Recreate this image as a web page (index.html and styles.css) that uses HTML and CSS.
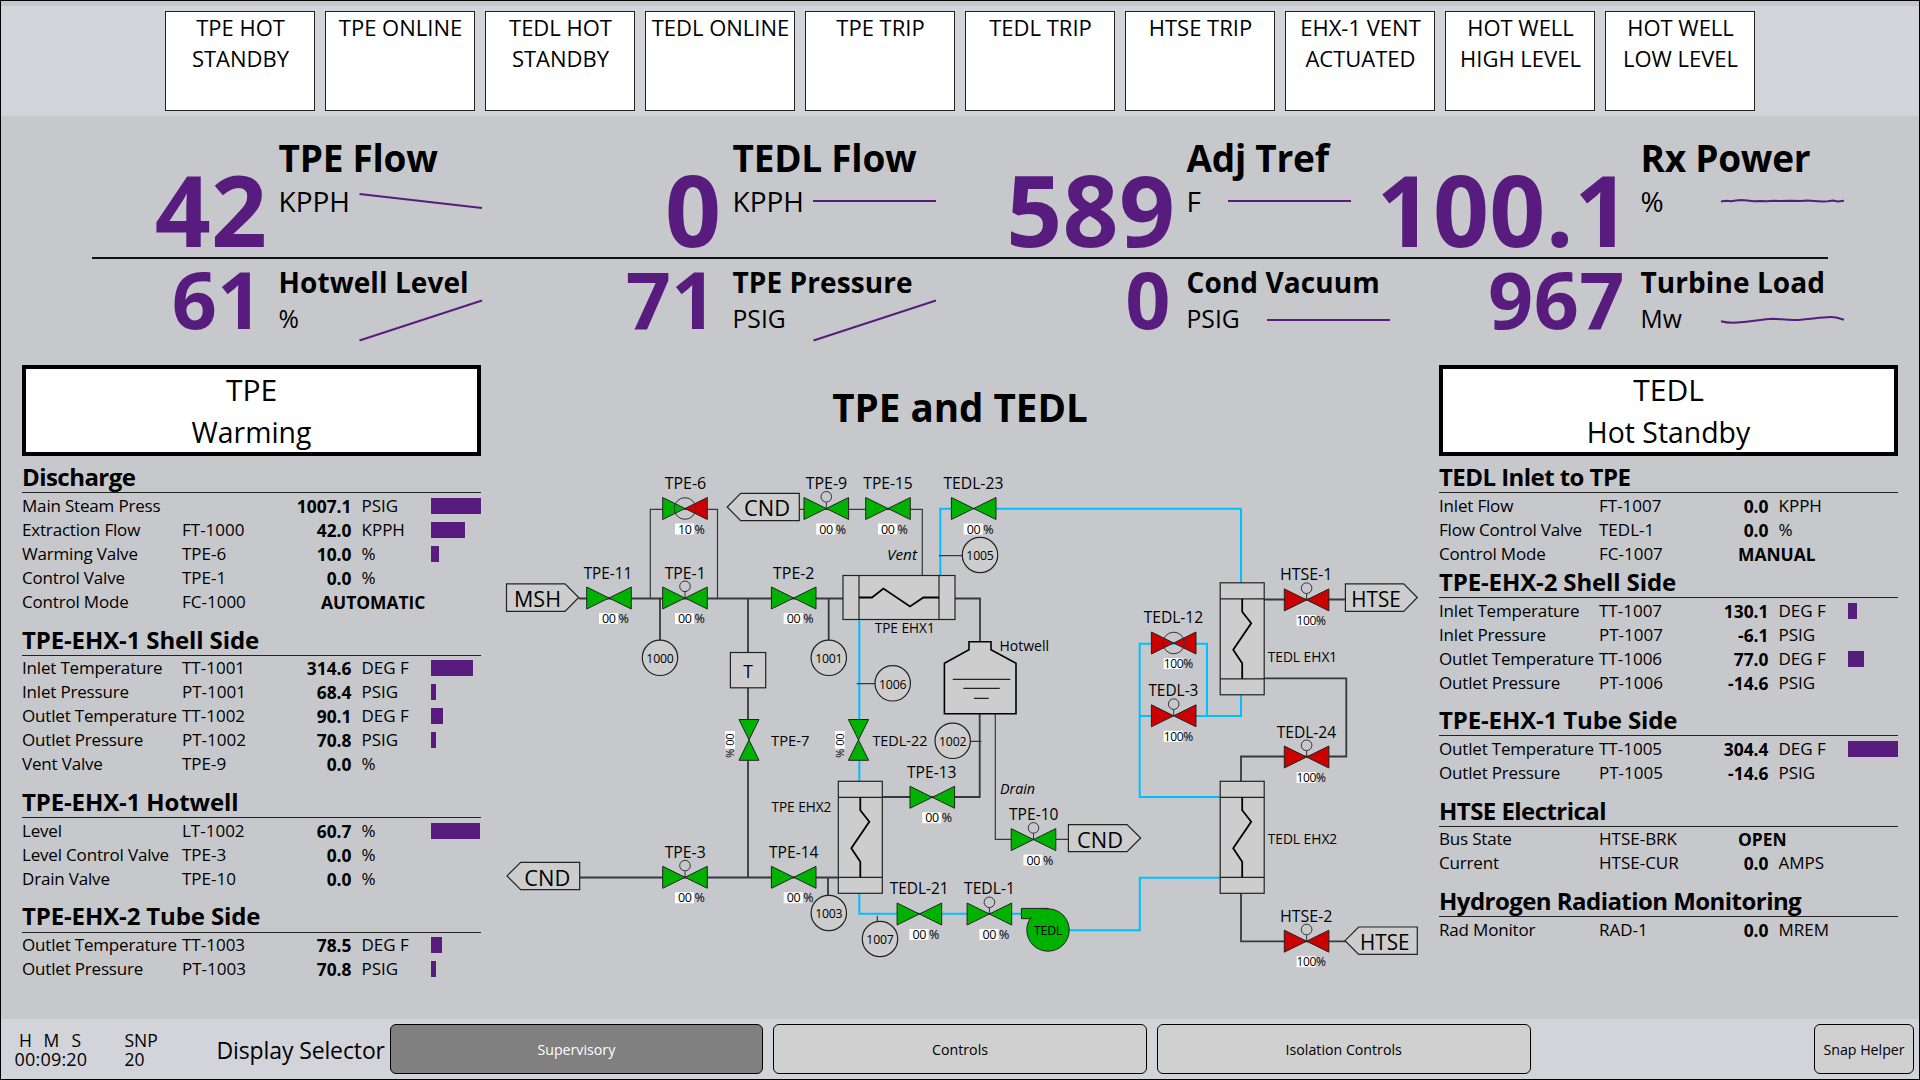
FILE: index.html
```html
<!DOCTYPE html>
<html lang="en">
<head>
<meta charset="utf-8">
<title>TPE and TEDL Supervisory</title>
<link rel="stylesheet" href="styles.css">
</head>
<body>
<div class="screen">
  <header class="alarms">
    <div class="alarm">TPE HOT STANDBY</div>
    <div class="alarm">TPE ONLINE</div>
    <div class="alarm">TEDL HOT STANDBY</div>
    <div class="alarm">TEDL ONLINE</div>
    <div class="alarm">TPE TRIP</div>
    <div class="alarm">TEDL TRIP</div>
    <div class="alarm">HTSE TRIP</div>
    <div class="alarm">EHX-1 VENT ACTUATED</div>
    <div class="alarm">HOT WELL HIGH LEVEL</div>
    <div class="alarm">HOT WELL LOW LEVEL</div>
  </header>

  <section class="kpis kpis-major">
    <div class="kpi"><div class="kpi-value">42</div><div class="kpi-info"><div class="kpi-name">TPE Flow</div><div class="kpi-sub"><span class="kpi-unit">KPPH</span><svg class="trend" viewBox="0 0 124 36"><path d="M0.5 10L123 24"/></svg></div></div></div>
    <div class="kpi"><div class="kpi-value">0</div><div class="kpi-info"><div class="kpi-name">TEDL Flow</div><div class="kpi-sub"><span class="kpi-unit">KPPH</span><svg class="trend" viewBox="0 0 124 36"><path d="M0 17H123"/></svg></div></div></div>
    <div class="kpi"><div class="kpi-value">589</div><div class="kpi-info"><div class="kpi-name">Adj Tref</div><div class="kpi-sub"><span class="kpi-unit kpi-unit-short">F</span><svg class="trend" viewBox="0 0 124 36"><path d="M0 17H123"/></svg></div></div></div>
    <div class="kpi"><div class="kpi-value">100.1</div><div class="kpi-info"><div class="kpi-name">Rx Power</div><div class="kpi-sub"><span class="kpi-unit">%</span><svg class="trend" viewBox="0 0 124 36"><path d="M0 17.4L5 16.8L10 17.3L15 16.4L20 16L26 16.6L33 17.3L40 16.9L46 17.2L52 16.7L60 17L70 16.7L80 17L86 16.5L93 17L101 17.6L107 17.3L112 16.6L117 17.5L123 16.8"/></svg></div></div></div>
  </section>
  <hr class="divider">
  <section class="kpis kpis-minor">
    <div class="kpi"><div class="kpi-value">61</div><div class="kpi-info"><div class="kpi-name">Hotwell Level</div><div class="kpi-sub"><span class="kpi-unit">%</span><svg class="trend" viewBox="0 0 124 36"><path d="M0.5 37.5L123 -2.5"/></svg></div></div></div>
    <div class="kpi"><div class="kpi-value">71</div><div class="kpi-info"><div class="kpi-name">TPE Pressure</div><div class="kpi-sub"><span class="kpi-unit">PSIG</span><svg class="trend" viewBox="0 0 124 36"><path d="M0.5 37.5L123 -2.5"/></svg></div></div></div>
    <div class="kpi"><div class="kpi-value">0</div><div class="kpi-info"><div class="kpi-name">Cond Vacuum</div><div class="kpi-sub"><span class="kpi-unit">PSIG</span><svg class="trend" viewBox="0 0 124 36"><path d="M0 17H123"/></svg></div></div></div>
    <div class="kpi"><div class="kpi-value">967</div><div class="kpi-info"><div class="kpi-name">Turbine Load</div><div class="kpi-sub"><span class="kpi-unit">Mw</span><svg class="trend" viewBox="0 0 124 36"><path d="M0 18.3C6 20 12 20.2 20 19.3C32 18 44 16 52 15.7C60 16 66 17.2 74 17C88 16.5 98 14.2 110 14C115 14 119 15.5 123 16.7"/></svg></div></div></div>
  </section>

  <main class="main">
    <aside class="panel">
      <div class="status"><div class="status-name">TPE</div><div class="status-mode">Warming</div></div>
      <section class="group">
        <h2>Discharge</h2>
        <div class="row"><span>Main Steam Press</span><span></span><b>1007.1</b><span class="unit">PSIG</span><i class="bar" style="width:50px"></i></div>
        <div class="row"><span>Extraction Flow</span><span class="tag">FT-1000</span><b>42.0</b><span class="unit">KPPH</span><i class="bar" style="width:34px"></i></div>
        <div class="row"><span>Warming Valve</span><span class="tag">TPE-6</span><b>10.0</b><span class="unit">%</span><i class="bar" style="width:8px"></i></div>
        <div class="row"><span>Control Valve</span><span class="tag">TPE-1</span><b>0.0</b><span class="unit">%</span></div>
        <div class="row"><span>Control Mode</span><span class="tag">FC-1000</span><b class="mode">AUTOMATIC</b></div>
      </section>
      <section class="group">
        <h2 class="equipment">TPE-EHX-1 Shell Side</h2>
        <div class="row"><span>Inlet Temperature</span><span class="tag">TT-1001</span><b>314.6</b><span class="unit">DEG F</span><i class="bar" style="width:42px"></i></div>
        <div class="row"><span>Inlet Pressure</span><span class="tag">PT-1001</span><b>68.4</b><span class="unit">PSIG</span><i class="bar" style="width:5px"></i></div>
        <div class="row"><span>Outlet Temperature</span><span class="tag">TT-1002</span><b>90.1</b><span class="unit">DEG F</span><i class="bar" style="width:12px"></i></div>
        <div class="row"><span>Outlet Pressure</span><span class="tag">PT-1002</span><b>70.8</b><span class="unit">PSIG</span><i class="bar" style="width:5px"></i></div>
        <div class="row"><span>Vent Valve</span><span class="tag">TPE-9</span><b>0.0</b><span class="unit">%</span></div>
      </section>
      <section class="group">
        <h2 class="equipment">TPE-EHX-1 Hotwell</h2>
        <div class="row"><span>Level</span><span class="tag">LT-1002</span><b>60.7</b><span class="unit">%</span><i class="bar" style="width:49px"></i></div>
        <div class="row"><span>Level Control Valve</span><span class="tag">TPE-3</span><b>0.0</b><span class="unit">%</span></div>
        <div class="row"><span>Drain Valve</span><span class="tag">TPE-10</span><b>0.0</b><span class="unit">%</span></div>
      </section>
      <section class="group">
        <h2 class="equipment">TPE-EHX-2 Tube Side</h2>
        <div class="row"><span>Outlet Temperature</span><span class="tag">TT-1003</span><b>78.5</b><span class="unit">DEG F</span><i class="bar" style="width:11px"></i></div>
        <div class="row"><span>Outlet Pressure</span><span class="tag">PT-1003</span><b>70.8</b><span class="unit">PSIG</span><i class="bar" style="width:5px"></i></div>
      </section>
    </aside>

    <div class="center">
      <h1>TPE and TEDL</h1>
      <svg class="mimic" viewBox="481 445 958 574" width="958" height="574">
        <defs>
          <path id="bowtie" d="M-22.3-11L0 0L22.3-11V11L0 0L-22.3 11Z"/>
          <g id="actuator"><path d="M0-6V0"/><circle cy="-11.7" r="5.3"/></g>
          <rect id="readout" x="-10" y="15" width="19" height="11"/>
          <g id="exchanger">
            <rect x="-22" y="-56" width="44" height="112"/>
            <path d="M-22-40H22M-22 40H22"/>
            <path class="coil" d="M0-40V-27L9-15.6L-9 11L0 24.4V40"/>
          </g>
          <circle id="sensor" r="17.7"/>
        </defs>

        <g class="pipe">
          <path d="M579 598.5H843M955 598.5H980V642"/>
          <path class="thin" d="M650.3 598.5V509.3H717.5V598.5"/>
          <path d="M660 598.5V640M828.7 598.5V640M748 598.5V652M748 688V719M748 760V877.5"/>
          <path class="thin" d="M799 509.3H922.3V575.5"/>
          <path d="M979.7 714V797H882"/>
          <path class="thin" d="M995.3 714V839.3H1068.5M971 741.3H981.5"/>
          <path d="M580 877.5H838.5M828 877.5V896"/>
          <path d="M1264 599.5H1345.5M1264 678.3H1346.3V756.5H1241V781.5M1241 893V941.3H1345.5"/>
        </g>
        <g class="water">
          <path d="M940.3 575.5V508.7H1241V583"/>
          <path d="M859.3 619.5V719M859.3 760V781.5M859.3 893V913.7H1022M1069 930.3H1139.8V877.7H1220"/>
          <path d="M1241 694.5V716H1139.7M1207 716V643.7H1139.7V797H1220"/>
        </g>
        <path class="pipe thin" d="M939 555.6H962.5M856.7 683.6H875M877.3 915.7V922"/>

        <g class="shape">
          <path d="M506.5 583.8H565L578.7 597.5L565 611.3H506.5Z"/>
          <path d="M799.3 493.3H740.7L727.2 507L740.7 520.7H799.3Z"/>
          <path d="M579.7 862.3H520.7L507 875.9L520.7 889.6H579.7Z"/>
          <path d="M1068.4 824.6H1127L1140.7 838L1127 851.6H1068.4Z"/>
          <path d="M1345.4 583.8H1403.7L1417.3 597.5L1403.7 611.3H1345.4Z"/>
          <path d="M1417.3 927H1358.7L1345 940.7L1358.7 954.4H1417.3Z"/>
          <rect x="730.4" y="652.5" width="35.3" height="35.3"/>
          <use href="#sensor" x="660" y="657.8"/><use href="#sensor" x="828.8" y="657.8"/>
          <use href="#sensor" x="980" y="555"/><use href="#sensor" x="892.7" y="683.3"/>
          <use href="#sensor" x="952.7" y="740.8"/><use href="#sensor" x="828.8" y="913"/>
          <use href="#sensor" x="880" y="939"/>
          <use href="#exchanger" transform="translate(899 597.5) rotate(-90)"/>
          <use href="#exchanger" x="860.3" y="837.3"/>
          <use href="#exchanger" x="1242.2" y="638.8"/>
          <use href="#exchanger" x="1242.2" y="837.3"/>
          <path class="tank" d="M969 641.8H991V649.7L1016 663.3V713.7H944.4V663.3L969 649.7Z"/>
          <path d="M952.7 679.4H1010.3M963.3 688.4H999.7M974 698.4H988.7"/>
        </g>

        <g class="valve open">
          <use href="#bowtie" x="609" y="598"/><use href="#bowtie" x="685" y="598"/><use href="#bowtie" x="793.7" y="598"/>
          <use href="#bowtie" x="826.3" y="508.5"/><use href="#bowtie" x="888" y="508.5"/><use href="#bowtie" x="973.7" y="508.5"/>
          <use href="#bowtie" x="932.3" y="797.3"/><use href="#bowtie" x="1033.5" y="839.6"/>
          <use href="#bowtie" x="685" y="877.3"/><use href="#bowtie" x="793.7" y="877.3"/>
          <use href="#bowtie" x="919.4" y="914"/><use href="#bowtie" x="989.4" y="914"/>
          <path d="M739 719.5H759L739 760.3H759Z"/><path d="M848.4 719.5H868.6L848.4 760.3H868.6Z"/>
          <path d="M662.7 497.5L685 508.5L662.7 519.5Z"/>
          <path d="M1021.4 908.4H1048V918.7H1021.4Z"/><circle cx="1048" cy="930" r="21.2"/>
          <path class="joint" d="M1030 909.2H1046V917.8H1032Z"/>
        </g>
        <g class="valve shut">
          <path d="M707.3 497.5L685 508.5L707.3 519.5Z"/>
          <use href="#bowtie" x="1306.6" y="599.9"/><use href="#bowtie" x="1173.7" y="643"/><use href="#bowtie" x="1173.7" y="715.8"/>
          <use href="#bowtie" x="1306.6" y="757"/><use href="#bowtie" x="1306.6" y="941.2"/>
        </g>
        <g class="outline">
          <circle cx="685" cy="508.5" r="10.8"/><circle cx="1173.7" cy="643" r="10.8"/>
          <use href="#actuator" x="685" y="598"/><use href="#actuator" x="826.3" y="508.5"/><use href="#actuator" x="1033.5" y="839.6"/>
          <use href="#actuator" x="685" y="877.3"/><use href="#actuator" x="989.4" y="914"/>
          <use href="#actuator" x="1306.6" y="599.9"/><use href="#actuator" x="1173.7" y="715.8"/><use href="#actuator" x="1306.6" y="757"/><use href="#actuator" x="1306.6" y="941.2"/>
        </g>
        <g class="readouts">
          <use href="#readout" x="609" y="598"/><use href="#readout" x="685" y="598"/><use href="#readout" x="793.7" y="598"/>
          <use href="#readout" x="685" y="508.5"/><use href="#readout" x="826.3" y="508.5"/><use href="#readout" x="888" y="508.5"/><use href="#readout" x="973.7" y="508.5"/>
          <use href="#readout" x="932.3" y="797.3"/><use href="#readout" x="1033.5" y="839.6"/>
          <use href="#readout" x="685" y="877.3"/><use href="#readout" x="793.7" y="877.3"/><use href="#readout" x="919.4" y="914"/><use href="#readout" x="989.4" y="914"/>
          <use href="#readout" x="1306.6" y="599.9"/><use href="#readout" x="1173.7" y="643"/><use href="#readout" x="1173.7" y="715.8"/><use href="#readout" x="1306.6" y="757"/><use href="#readout" x="1306.6" y="941.2"/>
          <rect x="725.3" y="731" width="9.7" height="17.7"/><rect x="835" y="731" width="9.7" height="17.7"/>
        </g>

        <g class="percent">
          <text x="602" y="623">00</text><text x="618.5" y="623">%</text>
          <text x="678" y="623">00</text><text x="694.5" y="623">%</text>
          <text x="786.7" y="623">00</text><text x="803.2" y="623">%</text>
          <text x="678" y="533.5">10</text><text x="694.5" y="533.5">%</text>
          <text x="819.3" y="533.5">00</text><text x="835.8" y="533.5">%</text>
          <text x="881" y="533.5">00</text><text x="897.5" y="533.5">%</text>
          <text x="966.7" y="533.5">00</text><text x="983.2" y="533.5">%</text>
          <text x="925.3" y="822.3">00</text><text x="941.8" y="822.3">%</text>
          <text x="1026.5" y="864.6">00</text><text x="1043" y="864.6">%</text>
          <text x="678" y="902.3">00</text><text x="694.5" y="902.3">%</text>
          <text x="786.7" y="902.3">00</text><text x="803.2" y="902.3">%</text>
          <text x="912.4" y="939">00</text><text x="928.9" y="939">%</text>
          <text x="982.4" y="939">00</text><text x="998.9" y="939">%</text>
          <text x="1296.6" y="625" textLength="29" lengthAdjust="spacingAndGlyphs">100%</text>
          <text x="1163.7" y="668" textLength="29" lengthAdjust="spacingAndGlyphs">100%</text>
          <text x="1163.7" y="740.8" textLength="29" lengthAdjust="spacingAndGlyphs">100%</text>
          <text x="1296.6" y="782" textLength="29" lengthAdjust="spacingAndGlyphs">100%</text>
          <text x="1296.6" y="966.2" textLength="29" lengthAdjust="spacingAndGlyphs">100%</text>
          <g class="upright"><text transform="translate(726.3 733.5) rotate(90)">00</text><text transform="translate(726.3 748.8) rotate(90)">%</text>
          <text transform="translate(836 733.5) rotate(90)">00</text><text transform="translate(836 748.8) rotate(90)">%</text></g>
        </g>

        <g class="label">
          <text x="583.7" y="578.5" textLength="48.5" lengthAdjust="spacingAndGlyphs">TPE-11</text>
          <text x="664.7" y="578.5" textLength="41" lengthAdjust="spacingAndGlyphs">TPE-1</text>
          <text x="773" y="578.5" textLength="41.5" lengthAdjust="spacingAndGlyphs">TPE-2</text>
          <text x="664.7" y="488.7" textLength="41.5" lengthAdjust="spacingAndGlyphs">TPE-6</text>
          <text x="805.7" y="488.7" textLength="41.5" lengthAdjust="spacingAndGlyphs">TPE-9</text>
          <text x="863.3" y="488.7" textLength="49.5" lengthAdjust="spacingAndGlyphs">TPE-15</text>
          <text x="943.4" y="488.7" textLength="60" lengthAdjust="spacingAndGlyphs">TEDL-23</text>
          <text x="907" y="777.7" textLength="49.5" lengthAdjust="spacingAndGlyphs">TPE-13</text>
          <text x="1009" y="820" textLength="49.5" lengthAdjust="spacingAndGlyphs">TPE-10</text>
          <text x="664.7" y="857.5" textLength="41" lengthAdjust="spacingAndGlyphs">TPE-3</text>
          <text x="769" y="857.5" textLength="49.5" lengthAdjust="spacingAndGlyphs">TPE-14</text>
          <text x="889.7" y="894.3" textLength="59" lengthAdjust="spacingAndGlyphs">TEDL-21</text>
          <text x="964" y="894.3" textLength="51" lengthAdjust="spacingAndGlyphs">TEDL-1</text>
          <text x="1143.7" y="622.9" textLength="59.5" lengthAdjust="spacingAndGlyphs">TEDL-12</text>
          <text x="1148.4" y="695.9" textLength="50" lengthAdjust="spacingAndGlyphs">TEDL-3</text>
          <text x="1276.7" y="737.5" textLength="59.5" lengthAdjust="spacingAndGlyphs">TEDL-24</text>
          <text x="1280" y="580.2" textLength="52.5" lengthAdjust="spacingAndGlyphs">HTSE-1</text>
          <text x="1280" y="921.5" textLength="52.5" lengthAdjust="spacingAndGlyphs">HTSE-2</text>
          <g class="side">
            <text x="771" y="745.7" textLength="38.5" lengthAdjust="spacingAndGlyphs">TPE-7</text>
            <text x="872.4" y="745.7" textLength="55" lengthAdjust="spacingAndGlyphs">TEDL-22</text>
          </g>
        </g>
        <g class="note">
          <text x="874.7" y="632.8" textLength="60" lengthAdjust="spacingAndGlyphs">TPE EHX1</text>
          <text x="771.4" y="812" textLength="60" lengthAdjust="spacingAndGlyphs">TPE EHX2</text>
          <text x="1267.7" y="662" textLength="69.5" lengthAdjust="spacingAndGlyphs">TEDL EHX1</text>
          <text x="1267.7" y="844.3" textLength="69.5" lengthAdjust="spacingAndGlyphs">TEDL EHX2</text>
          <text x="999.5" y="651" textLength="49.5" lengthAdjust="spacingAndGlyphs">Hotwell</text>
          <text class="slanted" x="887" y="560" textLength="30" lengthAdjust="spacingAndGlyphs">Vent</text>
          <text class="slanted" x="1000" y="793.5" textLength="35" lengthAdjust="spacingAndGlyphs">Drain</text>
        </g>
        <g class="sensor-id">
          <text x="660" y="662.7">1000</text><text x="828.8" y="662.7">1001</text>
          <text x="980" y="559.9">1005</text><text x="892.7" y="688.7">1006</text>
          <text x="952.7" y="745.9">1002</text><text x="828.8" y="918.2">1003</text>
          <text x="880" y="943.9">1007</text><text x="1048" y="934.9">TEDL</text>
          <text class="trap" x="748" y="677.8">T</text>
        </g>
        <g class="port">
          <text x="514" y="607.2" textLength="47" lengthAdjust="spacingAndGlyphs">MSH</text>
          <text x="744" y="516.2" textLength="46" lengthAdjust="spacingAndGlyphs">CND</text>
          <text x="524.3" y="885.8" textLength="46" lengthAdjust="spacingAndGlyphs">CND</text>
          <text x="1077" y="847.8" textLength="46" lengthAdjust="spacingAndGlyphs">CND</text>
          <text x="1351.3" y="607.2" textLength="49.5" lengthAdjust="spacingAndGlyphs">HTSE</text>
          <text x="1360" y="950.4" textLength="49.5" lengthAdjust="spacingAndGlyphs">HTSE</text>
        </g>
      </svg>
    </div>

    <aside class="panel">
      <div class="status"><div class="status-name">TEDL</div><div class="status-mode">Hot Standby</div></div>
      <section class="group group-tight">
        <h2>TEDL Inlet to TPE</h2>
        <div class="row"><span>Inlet Flow</span><span class="tag">FT-1007</span><b>0.0</b><span class="unit">KPPH</span></div>
        <div class="row"><span>Flow Control Valve</span><span class="tag">TEDL-1</span><b>0.0</b><span class="unit">%</span></div>
        <div class="row"><span>Control Mode</span><span class="tag">FC-1007</span><b class="mode">MANUAL</b></div>
      </section>
      <section class="group">
        <h2 class="equipment">TPE-EHX-2 Shell Side</h2>
        <div class="row"><span>Inlet Temperature</span><span class="tag">TT-1007</span><b>130.1</b><span class="unit">DEG F</span><i class="bar" style="width:9px"></i></div>
        <div class="row"><span>Inlet Pressure</span><span class="tag">PT-1007</span><b>-6.1</b><span class="unit">PSIG</span></div>
        <div class="row"><span>Outlet Temperature</span><span class="tag">TT-1006</span><b>77.0</b><span class="unit">DEG F</span><i class="bar" style="width:15.5px"></i></div>
        <div class="row"><span>Outlet Pressure</span><span class="tag">PT-1006</span><b>-14.6</b><span class="unit">PSIG</span></div>
      </section>
      <section class="group">
        <h2 class="equipment">TPE-EHX-1 Tube Side</h2>
        <div class="row"><span>Outlet Temperature</span><span class="tag">TT-1005</span><b>304.4</b><span class="unit">DEG F</span><i class="bar" style="width:50px"></i></div>
        <div class="row"><span>Outlet Pressure</span><span class="tag">PT-1005</span><b>-14.6</b><span class="unit">PSIG</span></div>
      </section>
      <section class="group">
        <h2>HTSE Electrical</h2>
        <div class="row"><span>Bus State</span><span class="tag">HTSE-BRK</span><b class="mode">OPEN</b></div>
        <div class="row"><span>Current</span><span class="tag">HTSE-CUR</span><b>0.0</b><span class="unit">AMPS</span></div>
      </section>
      <section class="group">
        <h2>Hydrogen Radiation Monitoring</h2>
        <div class="row"><span>Rad Monitor</span><span class="tag">RAD-1</span><b>0.0</b><span class="unit">MREM</span></div>
      </section>
    </aside>
  </main>

  <footer class="footer">
    <div class="clock"><div class="clock-head"><span>H</span><span>M</span><span>S</span></div><div class="clock-time">00:09:20</div></div>
    <div class="snap"><div>SNP</div><div>20</div></div>
    <div class="selector-label">Display Selector</div>
    <nav class="selector">
      <button class="btn btn-active">Supervisory</button>
      <button class="btn">Controls</button>
      <button class="btn">Isolation Controls</button>
    </nav>
    <button class="btn btn-helper">Snap Helper</button>
  </footer>
</div>
</body>
</html>
```
FILE: styles.css
```css
* { box-sizing: border-box; }

body {
  margin: 0;
  font-family: "Open Sans", "Noto Sans", sans-serif;
  color: #000;
}

.screen {
  width: 1920px;
  height: 1080px;
  border: 1px solid #000;
  background: #c7c8cc;
  display: flex;
  flex-direction: column;
  overflow: hidden;
}

/* Alarm strip */
.alarms {
  height: 115px;
  flex: none;
  display: flex;
  justify-content: center;
  gap: 10px;
  padding-top: 4px;
  border-top: 5px solid #c7c6cd;
  background: #d3d4d9;
}
.alarm {
  width: 150px;
  height: 100px;
  margin-top: 1px;
  padding-left: 1px;
  border: 1px solid #222;
  background: #fff;
  text-align: center;
  font-size: 22px;
  line-height: 31px;
}

/* Key values */
.kpis {
  flex: none;
  display: grid;
  grid-template-columns: repeat(4, 454px);
  padding-left: 13.5px;
}
.kpis-major { height: 141px; }
.kpis-minor { height: 106px; }
.kpi {
  display: grid;
  grid-template-columns: 253px 190px;
  column-gap: 11px;
}
.kpi-value {
  color: #581b7e;
  font-weight: 700;
  text-align: right;
  white-space: nowrap;
}
.kpi-name { font-weight: 700; white-space: nowrap; }
.kpi-sub { display: flex; height: 36px; }
.kpi-unit { width: 80.3px; flex: none; }
.kpi-unit-short { width: 41.8px; }
.trend {
  width: 124px;
  height: 36px;
  flex: none;
  overflow: visible;
  fill: none;
  stroke: #581b7e;
  stroke-width: 2;
}
.kpis-major .kpi-value { padding-top: 43px; font-size: 98px; line-height: 100px; letter-spacing: 0.4px; }
.kpis-major .kpi-info { padding-top: 16px; }
.kpis-major .kpi-name { font-size: 37px; line-height: 51px; margin-bottom: 1px; letter-spacing: -0.25px; }
.kpis-major .kpi-unit { font-size: 28px; line-height: 35px; }
.kpis-minor .kpi-value { font-size: 79px; line-height: 80px; padding-right: 4.5px; letter-spacing: 0.5px; }
.kpis-minor .kpi-info { padding-top: 5px; }
.kpis-minor .kpi-name { font-size: 28px; line-height: 36px; margin-bottom: 3px; letter-spacing: 0.08px; }
.kpis-minor .kpi-unit { font-size: 24.7px; line-height: 32px; }

.divider {
  width: 1736px;
  height: 2px;
  flex: none;
  margin: 0 0 0 91px;
  border: 0;
  background: #111;
}

/* Panels and mimic */
.main {
  flex: 1;
  display: grid;
  grid-template-columns: 459px 958px 459px;
  padding-left: 21px;
}
.status {
  height: 90.5px;
  margin-bottom: 5.7px;
  border: 4px solid #000;
  background: #fff;
  text-align: center;
}
.status-name { font-size: 30px; line-height: 42px; }
.status-mode { font-size: 28.4px; line-height: 42px; }
.group { margin-bottom: 10.1px; }
.group-tight { margin-bottom: 0.3px; }
.group h2 {
  height: 32.3px;
  margin: 0;
  border-bottom: 1px solid #222;
  font-size: 24px;
  line-height: 31.5px;
  font-weight: 700;
  letter-spacing: -0.55px;
}
.group .equipment { letter-spacing: -0.13px; }
.row {
  display: grid;
  grid-template-columns: 160px 79px 90.5px 68.5px 50px;
  align-items: center;
  height: 24px;
  padding-top: 0.6px;
  font-size: 17px;
  line-height: 24px;
  letter-spacing: -0.18px;
  white-space: nowrap;
}
.row b { font-size: 17.4px; letter-spacing: 0; text-align: right; }
.row .mode { grid-column: 3 / span 2; padding-left: 60px; text-align: left; }
.row .tag { letter-spacing: 0; }
.row .unit { padding-left: 10px; letter-spacing: 0; }
.bar { justify-self: start; margin-left: 11px; height: 16px; background: #581b7e; }

.center h1 {
  height: 80px;
  margin: 0;
  padding-top: 16px;
  font-size: 38.6px;
  line-height: 53px;
  text-align: center;
}
.mimic { display: block; stroke-linejoin: miter; }
.mimic text { stroke: none; fill: #000; }
.pipe { fill: none; stroke: #383838; stroke-width: 1.8; }
.pipe .thin, .pipe.thin { stroke-width: 1.2; }
.water { fill: none; stroke: #00bfff; stroke-width: 2; }
.shape { fill: #cdcdcd; stroke: #222; stroke-width: 1.2; }
.coil { fill: none; stroke: #000; stroke-width: 1.8; }
.tank { stroke: #000; stroke-width: 1.6; }
.valve { stroke: #222; stroke-width: 1; }
.open { fill: #00b200; }
.shut { fill: #cc0000; }
.joint { stroke: none; }
.outline { fill: none; stroke: #333; stroke-width: 1; }
.readouts { fill: #fff; stroke: none; }
.percent { font-size: 12.5px; letter-spacing: -0.4px; }
.upright { font-size: 11px; letter-spacing: -0.3px; }
.label { font-size: 15.8px; }
.side { font-size: 15px; }
.note { font-size: 14px; }
.slanted { font-style: italic; }
.sensor-id { font-size: 12.3px; letter-spacing: -0.2px; text-anchor: middle; }
.trap { font-size: 17.5px; }
.port { font-size: 21.5px; }

/* Footer */
.footer {
  height: 60px;
  flex: none;
  display: flex;
  padding: 5px 5px 5px 13.5px;
  background: #d3d4d9;
}
.clock { width: 110px; padding-top: 7px; font-size: 18px; line-height: 19px; }
.clock-head { display: grid; grid-template-columns: 24.5px 28px 20px; padding-left: 4.5px; font-size: 17.5px; }
.clock-time { letter-spacing: 0.2px; }
.snap { width: 92px; padding-top: 7px; font-size: 17.5px; line-height: 19px; }
.selector-label { width: 173px; font-size: 23px; line-height: 53px; letter-spacing: -0.12px; white-space: nowrap; }
.selector { display: flex; gap: 10px; }
.btn {
  width: 373.7px;
  height: 50px;
  padding: 0;
  border: 1px solid #000;
  border-radius: 6px;
  background: #d0d0d0;
  font: 14.2px "Open Sans", "Noto Sans", sans-serif;
  color: #000;
}
.btn-active { background: #808080; color: #fff; }
.btn-helper { width: 100px; margin-left: auto; }
```
